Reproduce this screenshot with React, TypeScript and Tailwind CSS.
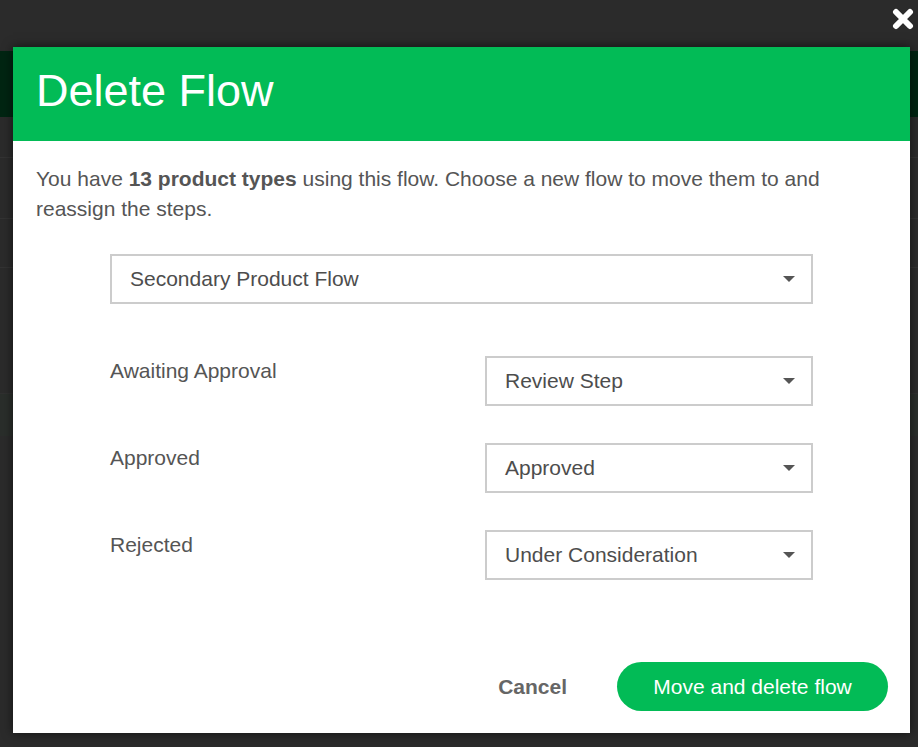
const steps = [
  { label: "Awaiting Approval", value: "Review Step" },
  { label: "Approved", value: "Approved" },
  { label: "Rejected", value: "Under Consideration" },
];

function Caret() {
  return (
    <svg width="12" height="6" viewBox="0 0 12 6" className="shrink-0">
      <path d="M0 0 L12 0 L6 6 Z" fill="#555555" />
    </svg>
  );
}

function SelectBox({ value, className }: { value: string; className?: string }) {
  return (
    <div
      className={`flex h-[50px] items-center justify-between border-2 border-[#cccccc] bg-white pl-[18px] pr-[16px] ${className ?? ""}`}
    >
      <span className="text-[21px] text-[#4d4d4d]">{value}</span>
      <Caret />
    </div>
  );
}

export default function App() {
  return (
    <div
      className="relative h-[747px] w-[918px] overflow-hidden bg-[#2b2b2b]"
      style={{ fontFamily: '"Liberation Sans", Arial, sans-serif' }}
    >
      {/* page behind the overlay */}
      <div className="flex flex-col">
        <div className="mt-[51px] h-[66px] bg-[#012512]" />
        <div className="h-[41px] border-b border-[#333333]" />
        <div className="h-[61px] border-b border-[#333333]" />
        <div className="h-[49px] border-b border-[#333333]" />
        <div className="h-[126px] border-b border-[#303030]" />
        <div className="h-[42px] bg-[#2a2e2b]" />
      </div>

      {/* close */}
      <button className="absolute right-[4px] top-[8px] h-[22px] w-[22px]">
        <svg viewBox="0 0 22 22" width="22" height="22">
          <path d="M4 4 L18 18 M18 4 L4 18" stroke="white" strokeWidth="6" strokeLinecap="round" />
        </svg>
      </button>

      {/* modal */}
      <div className="absolute left-[13px] top-[47px] flex w-[897px] flex-col bg-white shadow-[0_0_10px_rgba(0,0,0,0.6)]">
        <div className="flex h-[94px] items-center bg-[#02bb56] px-[23px] pb-[8px]">
          <h1 className="text-[45px] font-normal leading-none text-white">Delete Flow</h1>
        </div>

        <div className="flex flex-col pl-[23px] pr-[22px] pb-[22px] pt-[23px]">
          <p className="text-[21px] leading-[30px] text-[#555555]">
            You have <span className="font-bold">13 product types</span> using this flow. Choose a new flow to move them to
            and reassign the steps.
          </p>

          <div className="ml-[74px] mr-[75px] mt-[30px] flex flex-col">
            <SelectBox value="Secondary Product Flow" />

            <div className="mt-[52px] flex flex-col gap-[37px]">
              {steps.map((s) => (
                <div key={s.label} className="flex items-start justify-between">
                  <span className="text-[21px] leading-[30px] text-[#555555]">{s.label}</span>
                  <SelectBox value={s.value} className="w-[328px]" />
                </div>
              ))}
            </div>
          </div>

          <div className="mt-[82px] flex items-center justify-end gap-[50px]">
            <button className="text-[21px] font-bold text-[#666666]">Cancel</button>
            <button className="h-[49px] w-[271px] rounded-full bg-[#02bb56] text-[21px] text-white">
              Move and delete flow
            </button>
          </div>
        </div>
      </div>
    </div>
  );
}
